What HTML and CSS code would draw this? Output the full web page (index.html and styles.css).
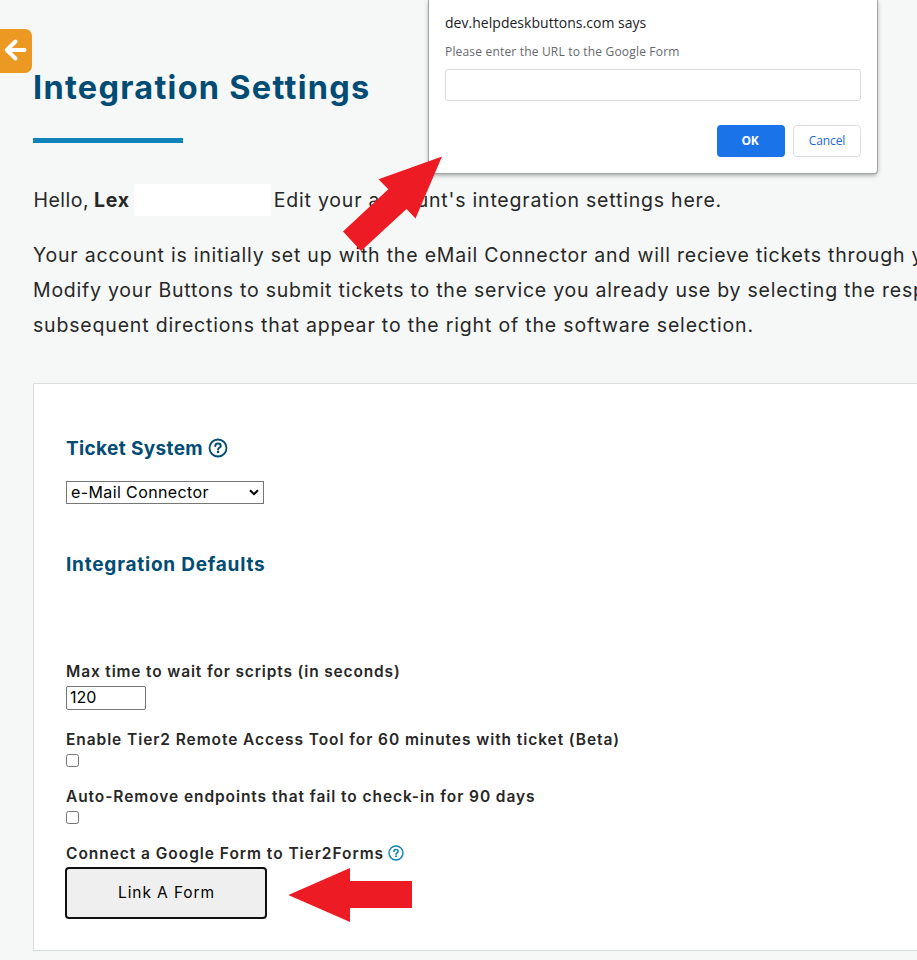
FILE: index.html
```
<!DOCTYPE html>
<html lang="en">
<head>
<meta charset="utf-8">
<title>Integration Settings</title>
<link rel="stylesheet" href="styles.css">
</head>
<body>
<main class="page">
  <h1>Integration Settings</h1>
  <div class="rule"></div>
  <p class="hello"><span class="greet">Hello,</span><b>Lex</b><span class="blank"></span><span class="edit">Edit your account's integration settings here.</span></p>
  <p class="intro"><span class="l1">Your account is initially set up with the eMail Connector and will recieve tickets through your</span><br><span class="l2">Modify your Buttons to submit tickets to the service you already use by selecting the respective</span><br><span class="l3">subsequent directions that appear to the right of the software selection.</span></p>
  <section class="panel">
    <h2 class="ticket"><span>Ticket System</span>
      <svg class="help" width="20" height="20" viewBox="0 0 20 20"><circle cx="10" cy="10" r="8.5"/><path d="M7.3 8C7.4 6.4 8.6 5.6 10 5.6c1.5 0 2.7.9 2.7 2.3 0 1.9-2.6 1.8-2.6 3.6"/><circle class="dot" cx="10.1" cy="14" r="1.3"/></svg>
    </h2>
    <div class="select"><span>e-Mail Connector</span><svg width="10" height="7" viewBox="0 0 10 7"><path d="M1 1.2 5 5.2 9 1.2"/></svg></div>
    <h2 class="defaults">Integration Defaults</h2>
    <div class="field first"><label class="max">Max time to wait for scripts (in seconds)</label><div class="number">120</div></div>
    <div class="field"><label class="enable">Enable Tier2 Remote Access Tool for 60 minutes with ticket (Beta)</label><div class="check"></div></div>
    <div class="field"><label class="enable">Auto-Remove endpoints that fail to check-in for 90 days</label><div class="check"></div></div>
    <div class="field"><label class="connect">Connect a Google Form to Tier2Forms
      <svg class="help small" width="16" height="16" viewBox="0 0 20 20"><circle cx="10" cy="10" r="8.7"/><path d="M7.3 8C7.4 6.4 8.6 5.6 10 5.6c1.5 0 2.7.9 2.7 2.3 0 1.9-2.6 1.8-2.6 3.6"/><circle class="dot" cx="10.1" cy="14" r="1.3"/></svg></label>
      <button class="link">Link A Form</button></div>
  </section>
</main>
<div class="back"><svg width="32" height="44" viewBox="0 0 32 44"><path d="M24.5 21H7M15.5 12.5 6.8 21l8.7 8.5"/></svg></div>
<div class="dialog">
  <div class="origin">dev.helpdeskbuttons.com says</div>
  <div class="message">Please enter the URL to the Google Form</div>
  <div class="url"></div>
  <div class="actions"><button class="ok">OK</button><button class="cancel">Cancel</button></div>
</div>
<svg class="arrows" width="917" height="960" viewBox="0 0 917 960"><path d="M442 156.5 378.5 179.3 388.3 189.3 343 231.5 361 251 406.5 209 415.5 218.5ZM288.3 895 350 868V881H412V908H350V922Z"/></svg>
</body>
</html>
```
FILE: styles.css
```
* { box-sizing: border-box; }
body {
  margin: 0;
  height: 960px;
  overflow: hidden;
  position: relative;
  background: #f6f8f8;
  color: #272727;
  font-family: Inter, "Liberation Sans", sans-serif;
}
h1, h2, p { margin: 0; }
.page { padding: 68px 0 0 33px; overflow: hidden; }
h1 {
  height: 40px;
  font-size: 32.5px;
  line-height: 40px;
  font-weight: 700;
  letter-spacing: 1.27px;
  color: #004c74;
}
.rule { width: 150px; height: 5px; margin-top: 30px; background: #0f82b8; }
.hello, .intro { font-size: 19.5px; line-height: 35px; white-space: nowrap; }
.hello { display: flex; align-items: center; height: 35px; margin-top: 39px; }
.hello span, .hello b { padding-top: 2px; }
.greet { width: 61px; padding-left: 0.5px; letter-spacing: 0.5px; }
.hello b { width: 40px; letter-spacing: 0.8px; }
.blank { width: 137px; height: 32px; margin-right: 2px; background: #fff; }
.edit { padding-left: 0.7px; letter-spacing: 0.8px; }
.intro { height: 125px; padding-top: 21px; }
.l1 { letter-spacing: 0.79px; }
.l2 { letter-spacing: 0.77px; }
.l3 { letter-spacing: 0.825px; }
.panel {
  width: 1000px;
  height: 568px;
  margin-top: 41px;
  padding: 52px 32px 31px;
  border: 1px solid #d9dedd;
  background: #fff;
}
h2 {
  height: 24px;
  font-size: 19px;
  line-height: 26px;
  font-weight: 700;
  color: #004c74;
}
.ticket { display: flex; align-items: center; letter-spacing: 0.36px; }
.ticket span { width: 142px; padding-top: 1px; white-space: nowrap; }
.help { flex: none; fill: none; stroke: currentColor; stroke-width: 1.8; stroke-linecap: round; }
.help path { stroke-width: 2; }
.help .dot { fill: currentColor; stroke: none; }
.select {
  display: flex;
  align-items: center;
  justify-content: space-between;
  width: 198px;
  height: 23px;
  margin-top: 21px;
  padding: 0 4px;
  border: 1px solid #767676;
  color: #000;
  font-size: 16px;
  line-height: 21px;
  letter-spacing: 0.39px;
}
.select svg { fill: none; stroke: #000; stroke-width: 2; }
.defaults { margin-top: 48px; letter-spacing: 0.78px; }
.field { margin-top: 19px; }
.field.first { margin-top: 85px; }
.field label {
  display: flex;
  align-items: center;
  height: 20px;
  padding-top: 1px;
  font-size: 15.5px;
  line-height: 21px;
  font-weight: 600;
  white-space: nowrap;
}
.max { letter-spacing: 0.85px; }
.enable { letter-spacing: 0.925px; }
.connect { letter-spacing: 0.96px; }
.small { margin: -1px 0 0 4px; color: #0f82b8; }
.number {
  width: 80px;
  height: 24px;
  margin-top: 5px;
  padding-left: 3px;
  border: 1px solid #767676;
  border-radius: 2px;
  color: #000;
  font-size: 16px;
  line-height: 20px;
}
.check {
  width: 13px;
  height: 13px;
  margin-top: 5px;
  border: 1px solid #767676;
  border-radius: 2.5px;
}
button { padding: 0; font-family: inherit; }
.link {
  display: block;
  width: 202px;
  height: 52px;
  margin: 4px 0 0 -1px;
  padding: 0 0 2px 1px;
  border: 2px solid #101010;
  border-radius: 4px;
  background: #efefef;
  color: #000;
  font-size: 15.5px;
  letter-spacing: 0.9px;
}
.back {
  position: absolute;
  left: 0;
  top: 29px;
  width: 32px;
  height: 44px;
  border-radius: 0 7px 7px 0;
  background: #ec9924;
}
.back svg { display: block; fill: none; stroke: #fff; stroke-width: 4; stroke-linecap: round; stroke-linejoin: round; }
.dialog {
  position: absolute;
  left: 429px;
  top: 0;
  width: 448px;
  height: 173px;
  padding: 13px 16px 0;
  border-radius: 0 0 3px 3px;
  background: #fff;
  box-shadow: 0 0 0 1px #a4a6a6, 0 2px 5px rgba(0, 0, 0, 0.4);
  font-family: "Open Sans", "Noto Sans", sans-serif;
}
.origin { height: 20px; font-size: 14px; line-height: 20px; letter-spacing: 0.03px; color: #202124; }
.message { height: 16px; margin-top: 11px; font-size: 12px; line-height: 16px; letter-spacing: 0.18px; color: #65686c; }
.url { height: 32px; margin-top: 9px; border: 1px solid #dadce0; border-radius: 3px; }
.actions { display: flex; justify-content: flex-end; gap: 8px; margin-top: 24px; }
.actions button { width: 68px; height: 32px; padding-bottom: 1px; border-radius: 4px; font-size: 12px; }
.actions .ok { padding-right: 2px; border: 0; background: #1a73e8; color: #fff; font-weight: 700; letter-spacing: -0.3px; }
.actions .cancel { border: 1px solid #dadce0; background: #fff; color: #1a67dc; letter-spacing: -0.1px; }
.arrows { position: absolute; left: 0; top: 0; fill: #ed1c24; pointer-events: none; }
```
